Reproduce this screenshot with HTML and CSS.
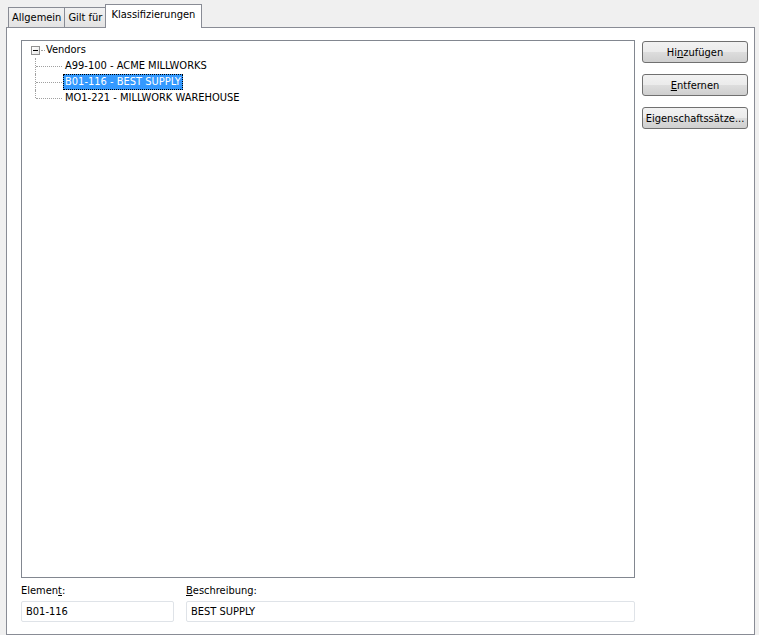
FILE: index.html
```html
<!DOCTYPE html>
<html>
  <head>
    <title>Klassifizierungen</title>
    <link rel="stylesheet" href="styles.css">
  </head>
  <body>
    <div class="tabs">
      <div class="tab">Allgemein</div>
      <div class="tab">Gilt für</div>
      <div class="tab tab-active">Klassifizierungen</div>
    </div>

    <div class="panel">
      <div class="main">
        <div class="tree">
          <div class="tree-root">
            <span class="toggle"></span>
            <span class="root-dots"></span>
            <span class="node-label">Vendors</span>
          </div>
          <ul class="children">
            <li class="child"><span class="node-label">A99-100 - ACME MILLWORKS</span></li>
            <li class="child"><span class="node-label selected">B01-116 - BEST SUPPLY</span></li>
            <li class="child last"><span class="node-label">MO1-221 - MILLWORK WAREHOUSE</span></li>
          </ul>
        </div>

        <div class="fields">
          <div class="field field-element">
            <label>Elemen<u>t</u>:</label>
            <div class="input">B01-116</div>
          </div>
          <div class="field field-desc">
            <label><u>B</u>eschreibung:</label>
            <div class="input">BEST SUPPLY</div>
          </div>
        </div>
      </div>

      <div class="side">
        <button class="btn">Hi<u>n</u>zufügen</button>
        <button class="btn"><u>E</u>ntfernen</button>
        <button class="btn">Eigenschaftssätze...</button>
      </div>
    </div>
  </body>
</html>
```

FILE: styles.css
```css
body {
  margin: 0;
  background-color: #f0f0f0;
  font-family: Tahoma, "DejaVu Sans Condensed", "Liberation Sans", sans-serif;
  font-size: 11px;
  color: #000000;
}

.tabs {
  display: flex;
  align-items: flex-end;
  height: 27px;
  padding-left: 8px;
}

.tab {
  height: 19px;
  line-height: 19px;
  padding: 0 3px;
  border: 1px solid #898c95;
  border-bottom: none;
  margin-right: -1px;
  background: linear-gradient(#f2f2f2, #e3e3e3);
}

.tab-active {
  position: relative;
  z-index: 1;
  height: 23px;
  line-height: 19px;
  margin-bottom: -1px;
  padding: 0 6px 0 5px;
  background: #ffffff;
}

.panel {
  display: flex;
  gap: 7px;
  margin: 0 4px 0 6px;
  padding: 12px 6px 12px 14px;
  border: 1px solid #898c95;
  background-color: #ffffff;
  box-sizing: border-box;
  height: 608px;
}

.main {
  display: flex;
  flex-direction: column;
  width: 614px;
}

.tree {
  height: 538px;
  border: 1px solid #828790;
  box-sizing: border-box;
  padding: 1px 0 0 9px;
}

.tree-root {
  display: flex;
  align-items: center;
  height: 16px;
}

.toggle {
  position: relative;
  width: 7px;
  height: 7px;
  border: 1px solid #919191;
  background: linear-gradient(135deg, #ffffff, #e6e6e6);
}

.toggle::after {
  content: "";
  position: absolute;
  left: 1px;
  top: 3px;
  width: 5px;
  height: 1px;
  background-color: #000000;
}

.root-dots {
  width: 4px;
  margin-left: 1px;
  border-top: 1px dotted #a0a0a0;
}

.node-label {
  display: inline-block;
  height: 14px;
  line-height: 14px;
  padding: 0 1px;
  border: 1px solid transparent;
  white-space: nowrap;
}

.tree-root .node-label {
  margin-left: -1px;
}

.child .node-label {
  margin-left: 1px;
}

.selected {
  background-color: #3399ff;
  color: #ffffff;
  border: 1px dotted #000000;
}

.children {
  list-style: none;
  margin: 0;
  padding: 0 0 0 4px;
}

.child {
  position: relative;
  height: 16px;
  padding-left: 27px;
  display: flex;
  align-items: center;
}

.child::before {
  content: "";
  position: absolute;
  left: 0;
  top: 0;
  height: 16px;
  border-left: 1px dotted #a0a0a0;
}

.child.last::before {
  height: 8px;
}

.child::after {
  content: "";
  position: absolute;
  left: 1px;
  top: 8px;
  width: 26px;
  border-top: 1px dotted #a0a0a0;
}

.fields {
  display: flex;
  gap: 12px;
  margin-top: 6px;
}

.field {
  display: flex;
  flex-direction: column;
}

.field-element {
  width: 153px;
}

.field-desc {
  flex: 1;
}

.field label {
  height: 17px;
  line-height: 13px;
}

.input {
  height: 21px;
  line-height: 19px;
  padding: 0 4px;
  border: 1px solid #dfe3e8;
  border-radius: 2px;
  box-sizing: border-box;
}

.side {
  display: flex;
  flex-direction: column;
  gap: 11px;
  padding-top: 1px;
}

.btn {
  width: 106px;
  height: 22px;
  padding: 0;
  border: 1px solid #707070;
  border-radius: 3px;
  background: linear-gradient(#f2f2f2 0%, #ebebeb 50%, #dddddd 51%, #cfcfcf 100%);
  font-family: inherit;
  font-size: 11px;
  color: #000000;
}
```
